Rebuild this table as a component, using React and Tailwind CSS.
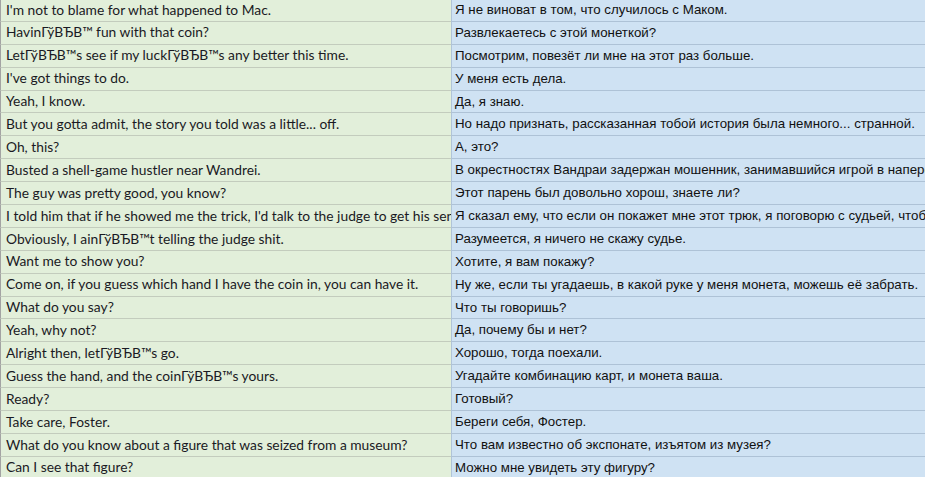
const rows = [
  ["I'm not to blame for what happened to Mac.", "Я не виноват в том, что случилось с Маком."],
  ["HavinГўВЂВ™ fun with that coin?", "Развлекаетесь с этой монеткой?"],
  ["LetГўВЂВ™s see if my luckГўВЂВ™s any better this time.", "Посмотрим, повезёт ли мне на этот раз больше."],
  ["I've got things to do.", "У меня есть дела."],
  ["Yeah, I know.", "Да, я знаю."],
  ["But you gotta admit, the story you told was a little... off.", "Но надо признать, рассказанная тобой история была немного... странной."],
  ["Oh, this?", "А, это?"],
  ["Busted a shell-game hustler near Wandrei.", "В окрестностях Вандраи задержан мошенник, занимавшийся игрой в наперстки."],
  ["The guy was pretty good, you know?", "Этот парень был довольно хорош, знаете ли?"],
  ["I told him that if he showed me the trick, I'd talk to the judge to get his sentence reduced.", "Я сказал ему, что если он покажет мне этот трюк, я поговорю с судьей, чтобы ему смягчили приговор."],
  ["Obviously, I ainГўВЂВ™t telling the judge shit.", "Разумеется, я ничего не скажу судье."],
  ["Want me to show you?", "Хотите, я вам покажу?"],
  ["Come on, if you guess which hand I have the coin in, you can have it.", "Ну же, если ты угадаешь, в какой руке у меня монета, можешь её забрать."],
  ["What do you say?", "Что ты говоришь?"],
  ["Yeah, why not?", "Да, почему бы и нет?"],
  ["Alright then, letГўВЂВ™s go.", "Хорошо, тогда поехали."],
  ["Guess the hand, and the coinГўВЂВ™s yours.", "Угадайте комбинацию карт, и монета ваша."],
  ["Ready?", "Готовый?"],
  ["Take care, Foster.", "Береги себя, Фостер."],
  ["What do you know about a figure that was seized from a museum?", "Что вам известно об экспонате, изъятом из музея?"],
  ["Can I see that figure?", "Можно мне увидеть эту фигуру?"],
];

export default function App() {
  return (
    <div className="w-[925px] h-[477px] overflow-hidden bg-[#cfe2f3]">
      <div className="flex flex-col -mt-[1px]">
        {rows.map(([en, ru], i) => (
          <div key={i} className="flex h-[22.9px] shrink-0">
            <div
              className="w-[451px] shrink-0 border-l border-l-[#a3a3a3] border-b border-b-[#c3ccbd] bg-[#e2efda] pl-[5px] flex items-center overflow-hidden whitespace-nowrap text-[13.8px] text-[#1a1a24]"
              style={{ fontFamily: "Lato, 'Open Sans', sans-serif" }}
            >
              {en}
            </div>
            <div
              className="flex-1 border-l border-l-[#b0c4d8] border-b border-b-[#aec2d6] bg-[#cfe2f3] pl-[3px] flex items-center overflow-hidden whitespace-nowrap text-[13.3px] text-[#111]"
              style={{ fontFamily: "'Liberation Sans', Arial, sans-serif" }}
            >
              {ru}
            </div>
          </div>
        ))}
      </div>
    </div>
  );
}
